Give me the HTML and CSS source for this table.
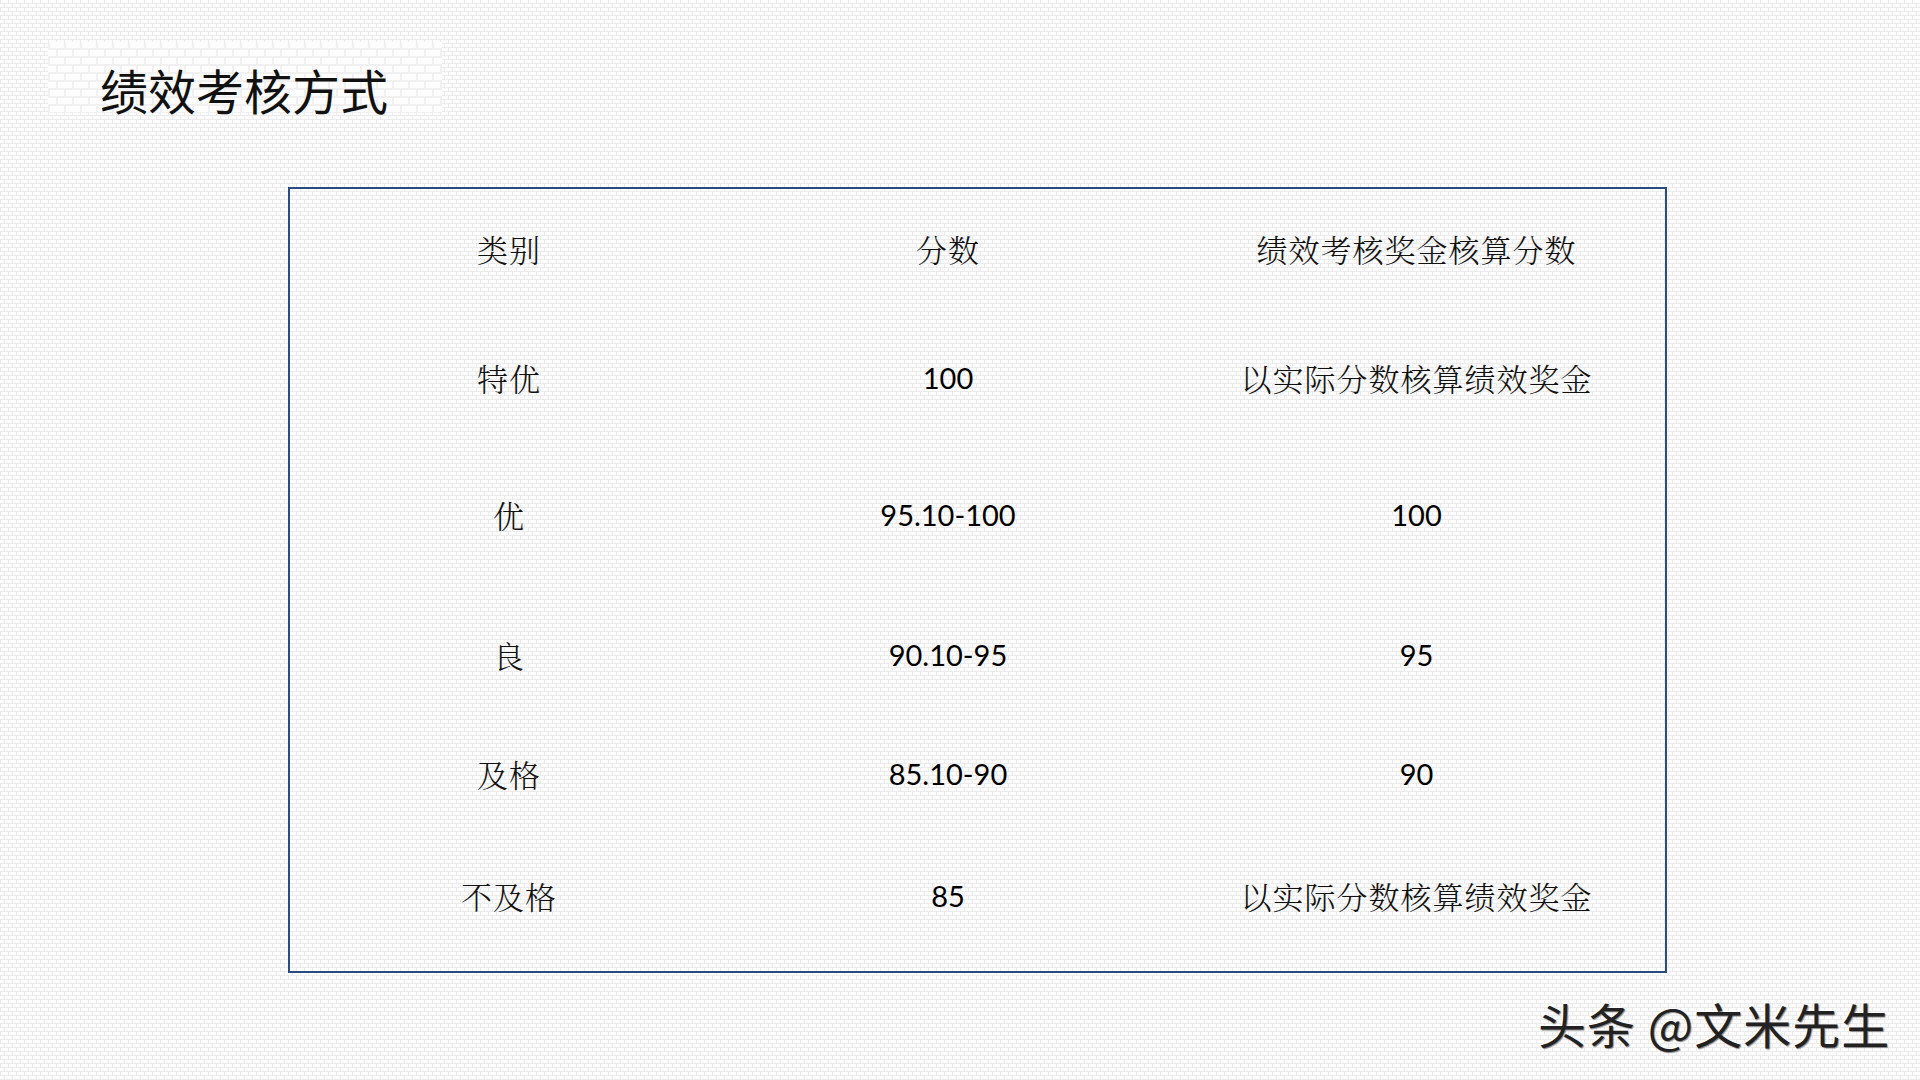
FILE: index.html
```html
<!DOCTYPE html>
<html lang="zh-CN">
<head>
<meta charset="utf-8">
<title>绩效考核方式</title>
<link rel="stylesheet" href="styles.css">
</head>
<body>
<div class="page">
  <header class="title-box">
    <h1 class="title">绩效考核方式</h1>
  </header>
  <div class="table-wrap">
    <div class="grid">
      <div class="cell cjk">类别</div>
      <div class="cell cjk">分数</div>
      <div class="cell cjk">绩效考核奖金核算分数</div>

      <div class="cell cjk">特优</div>
      <div class="cell num">100</div>
      <div class="cell cjk">以实际分数核算绩效奖金</div>

      <div class="cell cjk">优</div>
      <div class="cell num">95.10-100</div>
      <div class="cell num">100</div>

      <div class="cell cjk">良</div>
      <div class="cell num">90.10-95</div>
      <div class="cell num">95</div>

      <div class="cell cjk">及格</div>
      <div class="cell num">85.10-90</div>
      <div class="cell num">90</div>

      <div class="cell cjk">不及格</div>
      <div class="cell num">85</div>
      <div class="cell cjk">以实际分数核算绩效奖金</div>
    </div>
  </div>
  <div class="watermark">头条 @文米先生</div>
</div>
</body>
</html>
```

FILE: styles.css
```css
* { box-sizing: border-box; }

html, body {
  margin: 0;
  padding: 0;
}

body {
  width: 1920px;
  height: 1080px;
  overflow: hidden;
  background-color: #fbfbfb;
  background-image: url("data:image/svg+xml,%3Csvg xmlns='http://www.w3.org/2000/svg' width='8' height='8'%3E%3Crect width='8' height='8' fill='%23fcfcfc'/%3E%3Cpath d='M0 3.5H8M0 7.5H8M0.5 0V3M4.5 4V7' stroke='%23ebebeb' stroke-width='1'/%3E%3C/svg%3E");
  font-family: "Noto Sans CJK SC", sans-serif;
  color: #111;
}

.page {
  position: relative;
  width: 1920px;
  height: 1080px;
  display: flex;
  flex-direction: column;
}

.title-box {
  margin-left: 48px;
  margin-top: 42px;
  width: 394px;
  height: 71px;
  padding-top: 23px;
  padding-left: 52px;
  background-color: #fdfdfd;
  background-image: url("data:image/svg+xml,%3Csvg xmlns='http://www.w3.org/2000/svg' width='16' height='16'%3E%3Crect width='16' height='16' fill='%23fdfdfd'/%3E%3Cpath d='M0 7H16M0 15H16M1 0V6M9 8V14' stroke='%23f0f0f0' stroke-width='2'/%3E%3C/svg%3E");
}

.title {
  margin: 0;
  font-size: 48px;
  line-height: 48px;
  font-weight: 400;
  white-space: nowrap;
  color: #111;
}

.table-wrap {
  margin-top: 74px;
  margin-left: 288px;
  width: 1379px;
  border: 2px solid #2a4b80;
}

.grid {
  display: grid;
  grid-template-columns: 438px 440px 497px;
  grid-template-rows: 119px 138px 136px 144px 94px 151px;
}

.cell {
  display: flex;
  align-items: center;
  justify-content: center;
  white-space: nowrap;
  color: #111;
}

.cjk {
  font-family: "Noto Serif CJK SC", "Noto Sans CJK SC", serif;
  font-size: 31px;
  font-weight: 300;
  letter-spacing: 1px;
}

.num {
  font-family: Lato, "Open Sans", sans-serif;
  font-size: 29px;
  font-weight: 400;
  color: #000;
}

.watermark {
  position: absolute;
  left: 1538px;
  top: 997px;
  font-family: "Noto Sans CJK SC", sans-serif;
  font-size: 48px;
  line-height: 52px;
  font-weight: 400;
  letter-spacing: 1px;
  color: #222;
  white-space: nowrap;
  text-shadow: 1px 1px 1px rgba(0,0,0,0.45), -1px -1px 0 rgba(255,255,255,0.9);
}
```
